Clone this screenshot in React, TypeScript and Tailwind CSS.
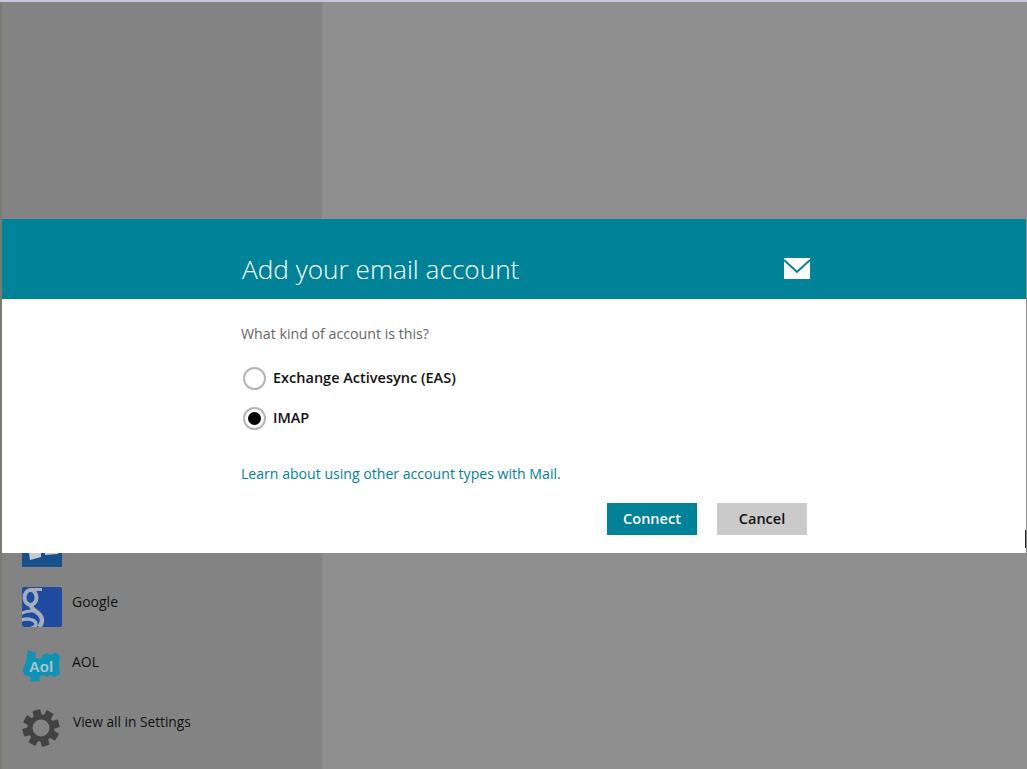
function OutlookIcon() {
  return (
    <svg viewBox="0 0 40 40" className="w-10 h-10 block">
      <rect width="40" height="40" fill="#17508a" />
      <path d="M7 26 H19 V30 L8 33 Z" fill="#c5ccd4" />
      <path d="M23 26 H36 V27 L23 28 Z" fill="#c5ccd4" />
    </svg>
  );
}

function GoogleIcon() {
  return (
    <svg viewBox="0 0 40 40" className="w-10 h-10 block">
      <clipPath id="google-box">
        <rect width="40" height="40" rx="2" />
      </clipPath>
      <g clipPath="url(#google-box)">
        <rect width="40" height="40" fill="#1f4aa0" />
        <g fill="none" stroke="#a3aebd">
          <ellipse cx="8.5" cy="10.5" rx="6" ry="7.5" strokeWidth="4" />
          <path d="M9 2.5 H20" strokeWidth="3" />
          <path d="M9 18 C9 24 20 25 20 33 C20 36 19 38 17 40" strokeWidth="4.5" />
          <path d="M-1 27 C4 23 8 24 12 24" strokeWidth="3" />
          <ellipse cx="5" cy="37" rx="9" ry="5" strokeWidth="3.5" />
        </g>
      </g>
    </svg>
  );
}

function AolIcon() {
  return (
    <svg viewBox="0 0 40 34" className="w-10 h-[34px] block">
      <path
        d="M6 0 L14 3 L13 8 L19 9 L20 6 L24 3 L29 5 L33 2 L38 6 L37 16 L38 24 L33 27 L28 25 L26 27 L20 25 L17 27 L18 31 L8 32 L9 27 L2 25 L1 19 L4 12 Z"
        fill="#0c93b5"
      />
      <text x="19" y="22" textAnchor="middle" fontFamily="'Liberation Sans', sans-serif" fontWeight="700" fontSize="15" fill="#a5c3cd">
        Aol
      </text>
    </svg>
  );
}

function GearIcon() {
  const teeth = [30, 75, 120, 165, 210, 255, 300, 345];
  return (
    <svg viewBox="0 0 40 40" className="w-10 h-10 block">
      {teeth.map((deg) => (
        <rect key={deg} x="15" y="2.5" width="8" height="8" rx="1" fill="#424242" transform={`rotate(${deg} 19 21)`} />
      ))}
      <circle cx="19" cy="21" r="11" fill="none" stroke="#424242" strokeWidth="5" />
    </svg>
  );
}

export default function App() {
  return (
    <div className="relative w-[1027px] h-[769px] overflow-hidden bg-[#8f8f8f] font-['Open_Sans','Noto_Sans',sans-serif] border-t-2 border-[#c5c8de]">
      <div className="flex h-full">
        <aside className="w-[322px] h-full flex flex-col justify-end gap-5 pb-[22px] pl-5 bg-[#838383] border-l-2 border-[#7a7a72] box-border">
          <OutlookIcon />
          <div className="flex gap-2.5">
            <GoogleIcon />
            <span className="text-[14px] leading-5 text-[#111] mt-[5px]">Google</span>
          </div>
          <div className="flex gap-2.5 h-10 items-start">
            <div className="mt-[3px]">
              <AolIcon />
            </div>
            <span className="text-[14px] leading-5 text-[#111] mt-[5px]">AOL</span>
          </div>
          <div className="flex gap-[11px]">
            <GearIcon />
            <span className="text-[13.7px] leading-5 text-[#111] mt-[5px]">View all in Settings</span>
          </div>
        </aside>
        <main className="flex-1" />
      </div>

      <section className="absolute left-0.5 right-px top-[217px] h-[334px] bg-white">
        <header className="h-20 bg-[#008299] pl-60 pr-[216px] flex items-start justify-between">
          <h1 className="mt-[32px] text-[26.2px] leading-9 font-light text-white">Add your email account</h1>
          <svg viewBox="0 0 26 21" className="mt-[39px] w-[26px] h-[21px]">
            <rect width="26" height="21" fill="#fff" />
            <path d="M0 2 L13 14 L26 2" fill="none" stroke="#008299" strokeWidth="2" />
          </svg>
        </header>
        <div className="pl-[239px] pr-[219px] pt-[25px]">
          <p className="text-[14.2px] leading-5 text-[#666]">What kind of account is this?</p>
          <div className="mt-[22px] flex flex-col gap-[16px]">
            <label className="flex items-center gap-[7px] h-6">
              <span className="ml-0.5 w-[23px] h-[23px] rounded-full border-2 border-[#b5b5b5] bg-white" />
              <span className="text-[14.5px] font-semibold text-[#111]">Exchange Activesync (EAS)</span>
            </label>
            <label className="flex items-center gap-[7px] h-6">
              <span className="ml-0.5 w-[23px] h-[23px] rounded-full border-2 border-[#b5b5b5] bg-white flex items-center justify-center">
                <span className="w-[13px] h-[13px] rounded-full bg-black" />
              </span>
              <span className="text-[14.5px] font-semibold text-[#111]">IMAP</span>
            </label>
          </div>
          <a className="block mt-[34px] text-[14.1px] leading-5 text-[#00829b]">Learn about using other account types with Mail.</a>
          <div className="mt-[19px] flex justify-end gap-5">
            <button className="w-[90px] h-8 bg-[#008299] text-white text-[14.5px] font-semibold">Connect</button>
            <button className="w-[90px] h-8 bg-[#cacaca] text-[#111] text-[14.5px] font-semibold">Cancel</button>
          </div>
        </div>
        <span className="absolute right-0 bottom-[5px] w-px h-[18px] bg-[#222]" />
      </section>
    </div>
  );
}
